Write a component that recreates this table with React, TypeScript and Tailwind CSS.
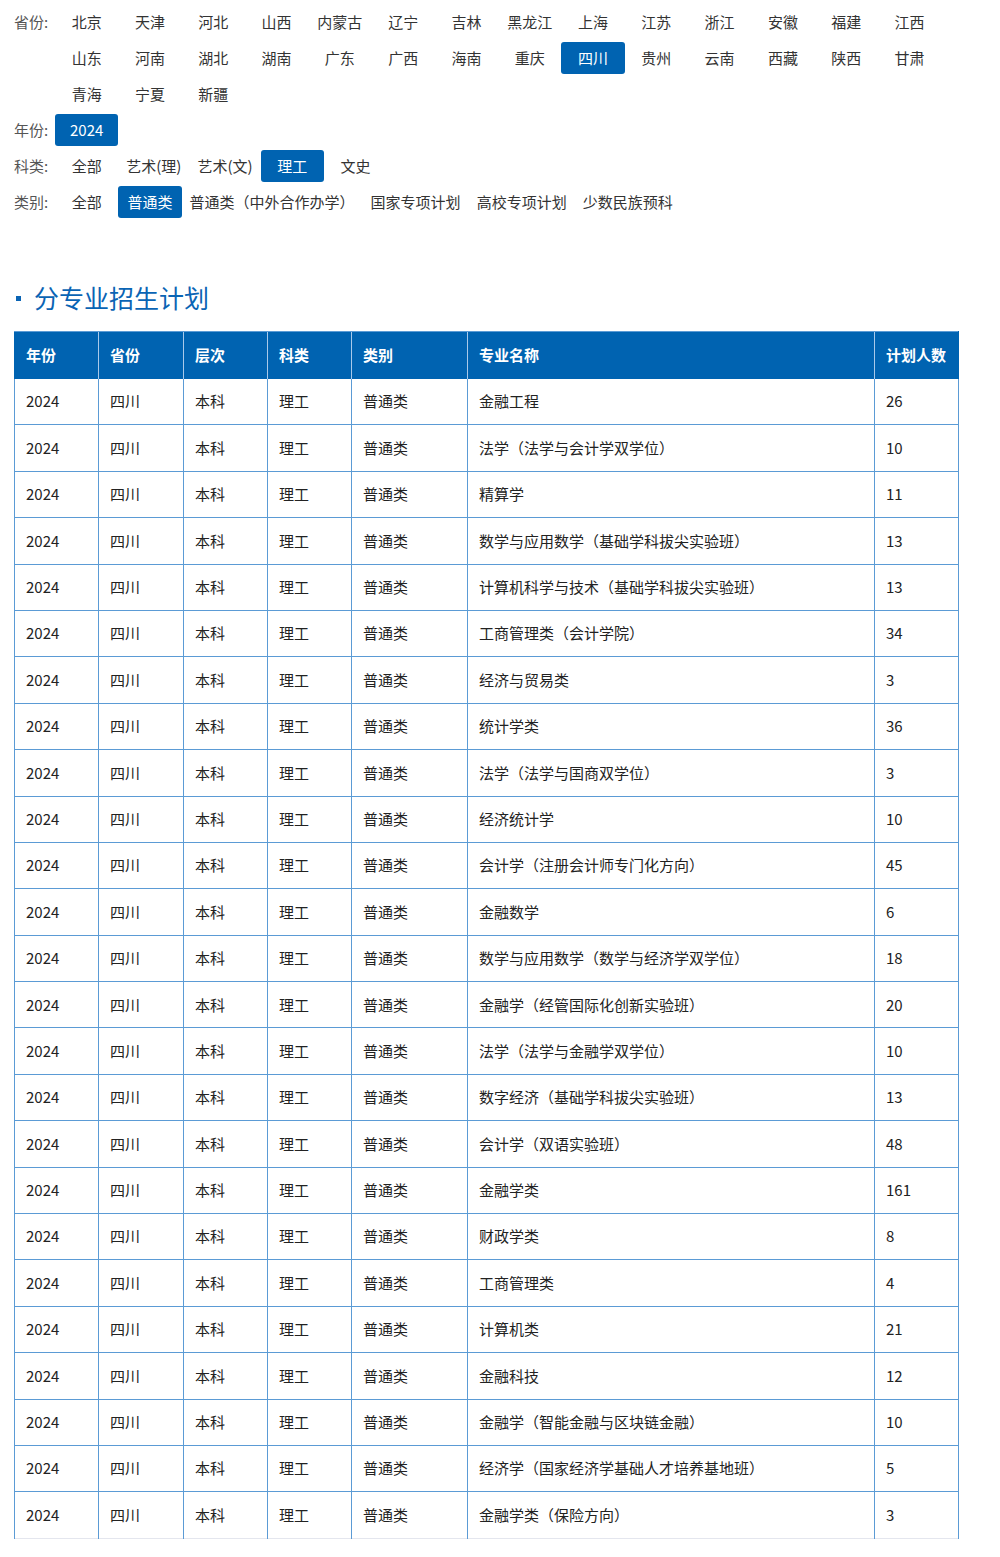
const provinces = [
  "北京", "天津", "河北", "山西", "内蒙古", "辽宁", "吉林", "黑龙江", "上海", "江苏", "浙江", "安徽", "福建", "江西",
  "山东", "河南", "湖北", "湖南", "广东", "广西", "海南", "重庆", "四川", "贵州", "云南", "西藏", "陕西", "甘肃",
  "青海", "宁夏", "新疆",
];

const subjects = ["全部", "艺术(理)", "艺术(文)", "理工", "文史"];
const types = ["全部", "普通类", "普通类（中外合作办学）", "国家专项计划", "高校专项计划", "少数民族预科"];

const majors: [string, number][] = [
  ["金融工程", 26],
  ["法学（法学与会计学双学位）", 10],
  ["精算学", 11],
  ["数学与应用数学（基础学科拔尖实验班）", 13],
  ["计算机科学与技术（基础学科拔尖实验班）", 13],
  ["工商管理类（会计学院）", 34],
  ["经济与贸易类", 3],
  ["统计学类", 36],
  ["法学（法学与国商双学位）", 3],
  ["经济统计学", 10],
  ["会计学（注册会计师专门化方向）", 45],
  ["金融数学", 6],
  ["数学与应用数学（数学与经济学双学位）", 18],
  ["金融学（经管国际化创新实验班）", 20],
  ["法学（法学与金融学双学位）", 10],
  ["数字经济（基础学科拔尖实验班）", 13],
  ["会计学（双语实验班）", 48],
  ["金融学类", 161],
  ["财政学类", 8],
  ["工商管理类", 4],
  ["计算机类", 21],
  ["金融科技", 12],
  ["金融学（智能金融与区块链金融）", 10],
  ["经济学（国家经济学基础人才培养基地班）", 5],
  ["金融学类（保险方向）", 3],
];

const headers = ["年份", "省份", "层次", "科类", "类别", "专业名称", "计划人数"];

function FilterItem({ label, active }: { label: string; active?: boolean }) {
  return (
    <span
      className={`my-[2px] flex h-8 min-w-[63.3px] items-center justify-center rounded-[3px] px-2 whitespace-nowrap ${
        active ? "bg-[#0063b1] text-white" : "text-[#333]"
      }`}
    >
      {label}
    </span>
  );
}

function FilterRow({ label, items, active }: { label: string; items: string[]; active: string }) {
  return (
    <div className="flex">
      <div className="h-9 w-[41px] shrink-0 leading-9 text-[#555]">{label}</div>
      <div className="flex w-[903px] flex-wrap">
        {items.map((it) => (
          <FilterItem key={it} label={it} active={it === active} />
        ))}
      </div>
    </div>
  );
}

export default function App() {
  return (
    <div
      className="min-h-[1557px] bg-white pl-[14px] pt-[4px] text-[15px]"
      style={{ fontFamily: '"Noto Sans CJK SC", "Open Sans", sans-serif' }}
    >
      <div className="w-[944px]">
        <FilterRow label="省份:" items={provinces} active="四川" />
        <FilterRow label="年份:" items={["2024"]} active="2024" />
        <FilterRow label="科类:" items={subjects} active="理工" />
        <FilterRow label="类别:" items={types} active="普通类" />

        <h2 className="mt-[58px] flex h-10 items-center text-[25px] text-[#0a64b4]">
          <span className="ml-[2px] mr-[13px] h-[5px] w-[5px] bg-[#0a64b4]" />
          分专业招生计划
        </h2>

        <table className="mt-[13px] w-[944px] table-fixed border-collapse">
          <colgroup>
            <col className="w-[84px]" />
            <col className="w-[85px]" />
            <col className="w-[84px]" />
            <col className="w-[84px]" />
            <col className="w-[116px]" />
            <col className="w-[407px]" />
            <col className="w-[84px]" />
          </colgroup>
          <thead>
            <tr className="h-[47px] bg-[#0063b1]">
              {headers.map((h, i) => (
                <th
                  key={h}
                  className={`border-t border-t-[#5b9bd5] pl-[11px] text-left font-bold text-white ${
                    i === 0 ? "border-l border-l-[#0063b1]" : "border-l border-l-[#a9c9ea]"
                  } ${i === headers.length - 1 ? "border-r border-r-[#0063b1]" : ""}`}
                >
                  {h}
                </th>
              ))}
            </tr>
          </thead>
          <tbody>
            {majors.map(([name, count], idx) => (
              <tr
                key={idx}
                className={`h-[46.4px] text-[#222] ${
                  idx === majors.length - 1 ? "border-b border-b-[#e4e6ee]" : "border-b border-b-[#5b9bd5]"
                }`}
              >
                <td className="border-x border-[#5b9bd5] pl-[11px]">2024</td>
                <td className="border-x border-[#5b9bd5] pl-[11px]">四川</td>
                <td className="border-x border-[#5b9bd5] pl-[11px]">本科</td>
                <td className="border-x border-[#5b9bd5] pl-[11px]">理工</td>
                <td className="border-x border-[#5b9bd5] pl-[11px]">普通类</td>
                <td className="border-x border-[#5b9bd5] pl-[11px]">{name}</td>
                <td className="border-x border-[#5b9bd5] pl-[11px]">{count}</td>
              </tr>
            ))}
          </tbody>
        </table>
      </div>
    </div>
  );
}
